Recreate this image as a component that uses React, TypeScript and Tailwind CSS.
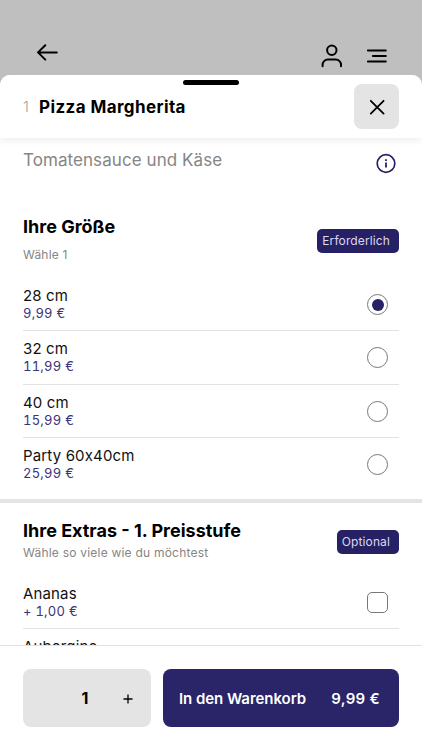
import { useState } from 'react';
import { clsx } from 'clsx';

const sizes = [
  { name: '28 cm', price: '9,99 €' },
  { name: '32 cm', price: '11,99 €' },
  { name: '40 cm', price: '15,99 €' },
  { name: 'Party 60x40cm', price: '25,99 €' },
];

const extras = [
  { name: 'Ananas', price: '+ 1,00 €' },
  { name: 'Aubergine', price: '+ 1,00 €' },
];

function TopBar() {
  return (
    <header className="flex h-[75px] shrink-0 items-start justify-between pl-9 pr-[34px] pt-[41px]">
      <button aria-label="Zurück">
        <svg width="23" height="23" viewBox="0 0 23 23" fill="none" stroke="#000" strokeWidth="2" strokeLinecap="round" strokeLinejoin="round">
          <path d="M20.8 11.4H2.5M9.3 4.2 2 11.4l7.3 7.2" />
        </svg>
      </button>
      <div className="flex gap-[22px] pt-0.5">
        <button aria-label="Konto">
          <svg width="23" height="26" viewBox="0 0 23 26" fill="none" stroke="#000" strokeWidth="2" strokeLinecap="round">
            <circle cx="11.8" cy="7.3" r="4.7" />
            <path d="M2.6 23.2v-1.4a5.2 5.2 0 0 1 5.2-5.2h8a5.2 5.2 0 0 1 5.2 5.2v1.4" />
          </svg>
        </button>
        <button aria-label="Menü">
          <svg width="23" height="26" viewBox="0 0 23 26" fill="none" stroke="#000" strokeWidth="2" strokeLinecap="round">
            <path d="M2.9 7.4h17.9M7.9 13h12.9M2.9 18.6h17.9" />
          </svg>
        </button>
      </div>
    </header>
  );
}

function Badge({ label }: { label: string }) {
  return (
    <span className="flex h-6 items-center rounded-[5px] bg-[#262064] pl-[5px] pr-[9px] text-[12px] tracking-[0.12px] text-[#dcd9ee]">
      {label}
    </span>
  );
}

function OptionText({ name, price }: { name: string; price: string }) {
  return (
    <span className="flex flex-col">
      <span className="h-[18px] text-[15px] leading-[18px] tracking-[0.15px] text-[#111]">{name}</span>
      <span className="h-[17px] text-[13px] leading-[17px] tracking-[0.25px] tabular-nums text-[#3c3478]">{price}</span>
    </span>
  );
}

export default function App() {
  const [selected, setSelected] = useState(0);
  const [checked, setChecked] = useState<string[]>([]);
  const [count, setCount] = useState(1);

  const toggle = (name: string) =>
    setChecked(checked.includes(name) ? checked.filter((n) => n !== name) : [...checked, name]);

  return (
    <div className="flex h-[750px] w-[422px] flex-col overflow-hidden bg-[#bfbfbf] font-['Inter','Liberation_Sans',sans-serif]">
      <TopBar />

      <main className="flex min-h-0 flex-1 flex-col overflow-hidden rounded-t-[10px] bg-white">
        <div className="z-10 flex h-[63px] shrink-0 flex-col bg-white shadow-[0_2px_8px_rgba(0,0,0,0.08)]">
          <div className="mt-[5px] h-[5px] w-14 shrink-0 self-center rounded-full bg-black" />
          <div className="-mt-px flex items-center justify-between px-[23px]">
            <h1 className="flex items-center pt-0.5 text-[17px] font-bold tracking-[0.4px] text-black">
              <span className="w-4 text-[15px] font-light text-[#a5a5a5]">1</span>
              Pizza Margherita
            </h1>
            <button aria-label="Schließen" className="flex size-[45px] items-center justify-center rounded-lg bg-[#e4e4e4]">
              <svg width="17" height="17" viewBox="0 0 17 17" fill="none" stroke="#000" strokeWidth="1.8" strokeLinecap="round">
                <path d="m2.8 2.8 12.8 12.8M15.6 2.8 2.8 15.6" />
              </svg>
            </button>
          </div>
        </div>

        <div className="flex min-h-0 flex-1 flex-col overflow-hidden">
          <div className="flex h-[73px] shrink-0 items-start justify-between pl-[23px] pr-[25px] pt-[11px]">
            <p className="text-[17px] leading-[22px] tracking-[0.07px] text-[#858585]">Tomatensauce und Käse</p>
            <svg className="mt-1" width="22" height="22" viewBox="0 0 22 22" fill="none" stroke="#262064" strokeWidth="1.7">
              <circle cx="11" cy="10.5" r="8.8" />
              <path d="M11 9.5v5" strokeWidth="1.8" />
              <path d="M11 6.2v1.9" strokeWidth="1.8" />
            </svg>
          </div>

          <section className="flex h-[288px] shrink-0 flex-col px-[23px]">
            <div className="flex h-[67px] shrink-0 items-start justify-between pt-1">
              <div>
                <h2 className="h-6 text-[18px] font-bold leading-6 text-black">Ihre Größe</h2>
                <p className="pt-[7px] text-[12px] leading-[18px] tracking-[0.2px] text-[#858585]">Wähle 1</p>
              </div>
              <div className="pt-[14px]">
                <Badge label="Erforderlich" />
              </div>
            </div>
            {sizes.map((size, i) => (
              <button
                key={size.name}
                onClick={() => setSelected(i)}
                className={clsx(
                  'flex h-[53.4px] shrink-0 items-start justify-between pr-[11px] pt-[9px] text-left',
                  i < sizes.length - 1 && 'border-b border-[#e2e2e2]'
                )}
              >
                <OptionText {...size} />
                <span className="mt-[7px] flex size-[21px] items-center justify-center rounded-full border border-[#777]">
                  {selected === i && <span className="size-3 rounded-full bg-[#262064]" />}
                </span>
              </button>
            ))}
          </section>

          <div className="h-1 shrink-0 bg-[#e4e4e4]" />

          <section className="flex shrink-0 flex-col px-[23px]">
            <div className="flex h-[73px] items-start justify-between pt-4">
              <div>
                <h2 className="h-6 text-[18px] font-bold leading-6 text-black">Ihre Extras - 1. Preisstufe</h2>
                <p className="pt-px text-[12px] leading-[18px] tracking-[0.22px] text-[#858585]">Wähle so viele wie du möchtest</p>
              </div>
              <div className="pt-[11px]">
                <Badge label="Optional" />
              </div>
            </div>
            {extras.map((extra) => (
              <button
                key={extra.name}
                onClick={() => toggle(extra.name)}
                className="flex h-[53.4px] shrink-0 items-start justify-between border-b border-[#e2e2e2] pr-[11px] pt-[9px] text-left"
              >
                <OptionText {...extra} />
                <span
                  className={clsx(
                    'mt-[7px] size-[21px] rounded-[5px] border border-[#777]',
                    checked.includes(extra.name) && 'bg-[#262064]'
                  )}
                />
              </button>
            ))}
          </section>
        </div>
      </main>

      <footer className="flex h-[105px] shrink-0 items-start gap-3 border-t border-[#e2e2e2] bg-white px-[23px] pt-[23px]">
        <div className="grid h-[58px] w-32 grid-cols-3 items-center rounded-lg bg-[#e4e4e4] text-center text-black">
          <span />
          <span className="pr-1 text-[16px] font-bold">{count}</span>
          <button aria-label="Mehr" onClick={() => setCount(count + 1)} className="flex justify-center pr-[3px] pt-0.5">
            <svg width="10" height="10" viewBox="0 0 10 10" stroke="#000" strokeWidth="1.3">
              <path d="M5 .5v9M.5 5h9" />
            </svg>
          </button>
        </div>
        <button className="flex h-[58px] flex-1 items-center justify-between rounded-lg bg-[#2a2469] pl-4 pr-[19px] pt-0.5 text-[15px] font-semibold text-white">
          <span className="tracking-[-0.05px]">In den Warenkorb</span>
          <span className="tracking-[0.3px]">9,99 €</span>
        </button>
      </footer>
    </div>
  );
}
